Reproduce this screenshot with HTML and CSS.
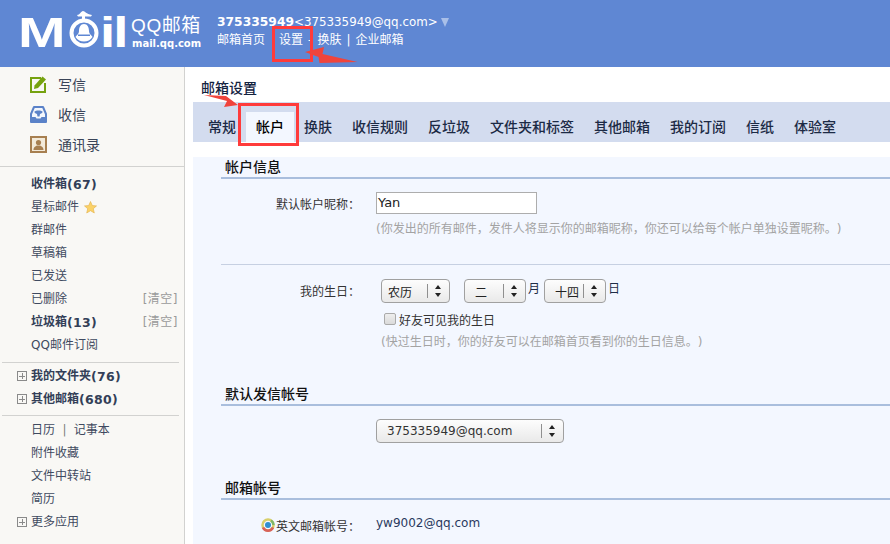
FILE: index.html
```html
<!DOCTYPE html>
<html lang="zh-CN">
<head>
<meta charset="utf-8">
<title>邮箱设置</title>
<link rel="stylesheet" href="styles.css">
</head>
<body>
<div class="page">
  <header class="top">
    <div class="logo">
      <span class="logo-m">M</span>
      <svg class="logo-a" width="36" height="38" viewBox="0 0 36 38">
        <circle cx="18" cy="23" r="12.500" fill="none" stroke="#fff" stroke-width="4"/>
        <path d="M11 5c3 0 4-4 6-4s3 3 9 4l-1 1.500H12z" fill="#fff"/>
        <path d="M16 6h3v5h-3z" fill="#fff"/>
        <path d="M18 14c3.500 0 5 3.500 5 7 0 3 2.500 4 3.500 6-2 3-5 4.500-8.500 4.500s-6.500-1.500-8.500-4.500c1-2 3.500-3 3.500-6 0-3.500 1.500-7 5-7z" fill="#fff"/>
        <path d="M12 24.500h12v1.500H12z" fill="#5f87d3"/>
      </svg>
      <span class="logo-il">il</span>
      <div class="logo-text">
        <div class="logo-name">QQ邮箱</div>
        <div class="logo-url">mail.qq.com</div>
      </div>
    </div>
    <div class="user">
      <div class="user-line"><b class="user-id">375335949</b><span class="user-mail">&lt;375335949@qq.com&gt;</span><span class="user-caret"></span></div>
      <nav class="user-nav">
        <span>邮箱首页</span><span class="nav-gap-a">设置</span><span class="nav-sep">-</span><span>换肤</span><span class="nav-sep">|</span><span>企业邮箱</span>
      </nav>
    </div>
  </header>
  <div class="layout">
    <aside class="side">
      <ul class="actions">
        <li class="action">
          <svg width="17" height="17" viewBox="0 0 17 17"><path d="M11 2H1v14h14V7" fill="none" stroke="#76a20f" stroke-width="2"/><path d="M4.500 9.500L12.500.5 16 3.500 8 12l-4 1z" fill="#76a20f"/></svg>
          <span>写信</span>
        </li>
        <li class="action">
          <svg width="17" height="17" viewBox="0 0 17 17"><path d="M4 1h9l3 7v8H1V8z" fill="#f3f6fc" stroke="#5b82c8" stroke-width="2" stroke-linejoin="round"/><path d="M1.500 11h4l1 1.500h4l1-1.500h4v4.500h-14z" fill="#5b82c8"/><path d="M4.500 5.500c1-1.500 7-1.500 8 0 .5 1-1 2-2.500 2.500l-.5 2.500h-2L7 8C5.500 7.500 4 6.500 4.500 5.500z" fill="#5b82c8"/></svg>
          <span>收信</span>
        </li>
        <li class="action">
          <svg width="17" height="17" viewBox="0 0 17 17"><rect x="1" y="1" width="15" height="15" fill="#f3ead9" stroke="#a77f50" stroke-width="2"/><circle cx="8.500" cy="6.500" r="2.600" fill="#a77f50"/><path d="M3.500 14c0-3 2-3.500 3.500-4.500h3c1.500 1 3.500 1.500 3.500 4.500z" fill="#a77f50"/></svg>
          <span>通讯录</span>
        </li>
      </ul>
      <ul class="folders folders-main">
        <li class="folder strong">收件箱<span class="num">(67)</span></li>
        <li class="folder">星标邮件<svg class="star" width="13" height="13" viewBox="0 0 13 13"><path d="M6.500.5l1.800 4 4.200.4-3.200 2.800 1 4.300-3.800-2.300-3.800 2.300 1-4.300L.5 4.900l4.200-.4z" fill="#fbd268" stroke="#e2b04a" stroke-width=".6"/></svg></li>
        <li class="folder">群邮件</li>
        <li class="folder">草稿箱</li>
        <li class="folder">已发送</li>
        <li class="folder has-clear">已删除<span class="clear">[清空]</span></li>
        <li class="folder has-clear strong">垃圾箱<span class="num">(13)</span><span class="clear">[清空]</span></li>
        <li class="folder">QQ邮件订阅</li>
      </ul>
      <ul class="folders folders-group">
        <li class="folder strong"><span class="plus"></span>我的文件夹<span class="num">(76)</span></li>
        <li class="folder strong"><span class="plus"></span>其他邮箱<span class="num">(680)</span></li>
      </ul>
      <ul class="folders folders-apps">
        <li class="folder">日历<span class="pipe">|</span>记事本</li>
        <li class="folder">附件收藏</li>
        <li class="folder">文件中转站</li>
        <li class="folder">简历</li>
        <li class="folder"><span class="plus"></span>更多应用</li>
      </ul>
    </aside>
    <main class="main">
      <h1 class="title">邮箱设置</h1>
      <div class="tabs">
        <span class="tab">常规</span>
        <span class="tab active">帐户</span>
        <span class="tab">换肤</span>
        <span class="tab">收信规则</span>
        <span class="tab">反垃圾</span>
        <span class="tab">文件夹和标签</span>
        <span class="tab">其他邮箱</span>
        <span class="tab">我的订阅</span>
        <span class="tab">信纸</span>
        <span class="tab">体验室</span>
      </div>
      <div class="panel">
        <h2 class="head head-1">帐户信息</h2>
        <div class="row row-nick">
          <label class="label">默认帐户昵称：</label>
          <div>
            <div class="input">Yan</div>
            <p class="hint">(你发出的所有邮件，发件人将显示你的邮箱昵称，你还可以给每个帐户单独设置昵称。)</p>
          </div>
        </div>
        <div class="rule"></div>
        <div class="row row-birth">
          <label class="label">我的生日：</label>
          <div class="birth">
            <div class="date">
              <div class="select sel-cal"><span class="sel-text">农历</span><span class="sel-arrows"></span></div>
              <div class="select sel-month"><span class="sel-text">二</span><span class="sel-arrows"></span></div>
              <span class="unit">月</span>
              <div class="select sel-day"><span class="sel-text">十四</span><span class="sel-arrows"></span></div>
              <span class="unit">日</span>
            </div>
            <div class="check"><span class="box"></span>好友可见我的生日</div>
            <p class="hint hint-birth">(快过生日时，你的好友可以在邮箱首页看到你的生日信息。)</p>
          </div>
        </div>
        <h2 class="head head-2">默认发信帐号</h2>
        <div class="row row-send">
          <span></span>
          <div class="select sel-mail"><span class="sel-text">375335949@qq.com</span><span class="sel-arrows"></span></div>
        </div>
        <h2 class="head head-3">邮箱帐号</h2>
        <div class="row row-en">
          <label class="label label-en">
            <svg class="en-icon" width="14" height="14" viewBox="0 0 14 14"><circle cx="7" cy="7" r="5.500" fill="none" stroke="#d8cf6a" stroke-width="2.500"/><path d="M2 9.500A5.500 5.500 0 0 0 12 9.500" fill="none" stroke="#d8625a" stroke-width="2.500"/><path d="M10 2.500A5.500 5.500 0 0 1 12.500 7" fill="none" stroke="#7fb76a" stroke-width="2.500"/><circle cx="7" cy="7" r="3" fill="#2f8fd0"/></svg>英文邮箱帐号：
          </label>
          <div class="value">yw9002@qq.com</div>
        </div>
      </div>
    </main>
  </div>
  <svg class="marks" width="890" height="544" viewBox="0 0 890 544">
    <rect x="273.500" y="27.500" width="38" height="33" fill="none" stroke="#ff3b3b" stroke-width="3"/>
    <rect x="239.500" y="104.500" width="58" height="40" fill="none" stroke="#ff3b3b" stroke-width="3"/>
    <path d="M305 52l19-5-1.500 7 35 8-38 1-1-6z" fill="#f0443c"/>
    <path d="M204 95l22 1 12 9-14 2 3-6z" fill="#f0443c"/>
  </svg>
</div>
</body>
</html>
```
FILE: styles.css
```css
* { box-sizing: border-box; }
html, body { margin: 0; padding: 0; }
body { font-family: "DejaVu Sans", "Noto Sans CJK SC", sans-serif; font-size: 12px; color: #1f2d47; text-spacing-trim: space-all; }
ul { list-style: none; margin: 0; padding: 0; }
p, h1, h2 { margin: 0; }

.page { position: relative; width: 890px; height: 544px; overflow: hidden; background: #fff; }

/* Header */
.top { height: 67px; background: #5f87d3; color: #fff; display: flex; align-items: flex-start; padding-left: 20px; }
.logo { display: flex; align-items: flex-start; width: 197px; }
.logo-m { font: bold 42px/1 "Liberation Sans", sans-serif; margin: 12px 0 0 -2px; width: 48px; transform: scaleX(1.36); transform-origin: left; }
.logo-a { margin-top: 10px; flex: none; }
.logo-il { font: bold 42px/1 "Liberation Sans", sans-serif; margin: 12px 0 0 -2px; width: 30px; letter-spacing: -1.500px; transform: scaleX(1.3); transform-origin: left; }
.logo-text { margin-left: 1px; margin-top: 14px; }
.logo-name { font-size: 19px; line-height: 23px; white-space: nowrap; font-family: "Liberation Sans", "Noto Sans CJK SC", sans-serif; letter-spacing: .6px; }
.logo-url { font: bold 10px/13px "DejaVu Sans", sans-serif; margin-left: 1px; white-space: nowrap; }
.user { padding-top: 13px; }
.user-line { display: flex; align-items: center; height: 18px; white-space: nowrap; }
.user-id { font-size: 12.300px; }
.user-mail { font-size: 11.850px; }
.user-caret { width: 0; height: 0; border: 4.500px solid transparent; border-top: 9px solid #a9bfe8; border-bottom: 0; margin-left: 3px; }
.user-nav { display: flex; line-height: 18px; }
.nav-gap-a { margin-left: 14px; }
.nav-sep { margin: 0 5px; }

/* Layout */
.layout { display: flex; height: 477px; }
.side { width: 185px; flex: none; background: #f9f8f5; border-right: 1px solid #d2d2d0; color: #3f4a60; padding-top: 2px; }
.action { height: 30px; display: flex; align-items: center; padding-left: 30px; color: #3a4458; }
.action span { margin-left: 11px; font-size: 14px; }
.folders { border-top: 1px solid #d2d2d0; }
.folders-main { margin-top: 7px; padding-top: 6px; }
.folders-group { margin: 5px 5px 0 2px; padding-top: 2px; }
.folders-apps { margin: 4px 5px 0 2px; padding-top: 3px; }
.folder { height: 23px; line-height: 23px; padding-left: 31px; position: relative; display: flex; align-items: center; }
.folders-group .folder, .folders-apps .folder { padding-left: 29px; }
.strong { font-weight: bold; color: #333f58; }
.num { font-size: 12.500px; letter-spacing: .3px; }
.star { margin-left: 5px; }
.clear { margin-left: auto; margin-right: 6px; color: #9a9a9a; font-weight: normal; letter-spacing: .5px; }
.pipe { margin: 0 7.400px; color: #7d7d7d; }
.plus { position: absolute; left: 15px; top: 6px; width: 10px; height: 10px; border: 1px solid #8a8a8a;
  background: linear-gradient(#8a8a8a, #8a8a8a) center / 6px 1px no-repeat, linear-gradient(#8a8a8a, #8a8a8a) center / 1px 6px no-repeat; }

/* Main */
.main { flex: 1; margin-left: 8px; min-width: 0; }
.title { height: 35px; font-size: 14px; line-height: 20px; padding: 11px 0 0 8px; font-weight: 500; color: #14233f; }
.tabs { height: 40px; background: #d3dcef; display: flex; align-items: flex-end; padding-left: 5px; }
.tab { height: 30px; line-height: 30px; padding: 0 10px; font-size: 14px; font-weight: 500; color: #1c2a45; white-space: nowrap; }
.tab.active { background: #f3f7ff; color: #000; }
.panel { background: #f3f7ff; height: 400px; padding-left: 28px; }

.head { height: 22px; line-height: 20px; padding-left: 4px; font-size: 14px; font-weight: 500; color: #111; border-bottom: 2px solid #a9bedd; }
.head-1 { margin-top: 15px; }
.head-2 { margin-top: 33px; }
.head-3 { margin-top: 35px; }

.row { display: grid; grid-template-columns: 139px 1fr; column-gap: 16px; }
.row-nick, .row-send, .row-en { margin-top: 13px; }
.row-birth { margin-top: 14px; }
.label { text-align: right; color: #333; line-height: 18px; padding-top: 4px; white-space: nowrap; }
.label-en { display: flex; justify-content: flex-end; align-items: center; height: 23px; padding-top: 5px; }
.en-icon { margin: -4px 1px 0 0; }
.input { width: 161px; height: 22px; border: 1px solid #adadad; background: #fff; font-size: 13px; line-height: 19px; padding-left: 1px; color: #222; }
.hint { color: #a3a3a3; line-height: 18px; margin-top: 6px; white-space: nowrap; }
.rule { height: 1px; background: #c6d0e2; margin-top: 26px; }

.birth { padding-left: 5px; }
.date { display: flex; align-items: flex-start; }
.unit { line-height: 20px; margin: 0 4px 0 2px; }
.select { height: 24px; border: 1px solid #a0a0a0; border-radius: 4px; background: linear-gradient(#fdfdfd, #e9e9e9); display: flex; align-items: center; position: relative; color: #222; }
.sel-text { flex: 1; }
.sel-arrows { flex: none; width: 22px; height: 14px; border-left: 1px solid #8f8f8f; position: relative; }
.sel-arrows::before, .sel-arrows::after { content: ""; position: absolute; left: 7px; width: 0; height: 0; border: 3px solid transparent; }
.sel-arrows::before { top: 1px; border-top: 0; border-bottom: 4px solid #222; }
.sel-arrows::after { bottom: 1px; border-bottom: 0; border-top: 4px solid #222; }
.sel-cal { width: 69px; padding-left: 6px; margin-right: 14px; }
.sel-month { width: 62px; padding-left: 10px; }
.sel-day { width: 62px; padding-left: 10px; }
.sel-mail { width: 188px; padding-left: 10px; color: #333; }
.check { display: flex; align-items: center; height: 18px; margin-top: 7px; padding-left: 3px; color: #333; }
.box { width: 12px; height: 12px; border: 1px solid #aaa; border-radius: 2px; background: linear-gradient(#eee, #dadada); margin-right: 3px; }
.hint-birth { margin-top: 5px; }
.value { font-size: 12px; line-height: 18px; padding-top: 1px; color: #2a3a5e; }

/* Annotations over the screenshot */
.marks { position: absolute; left: 0; top: 0; pointer-events: none; }
```
